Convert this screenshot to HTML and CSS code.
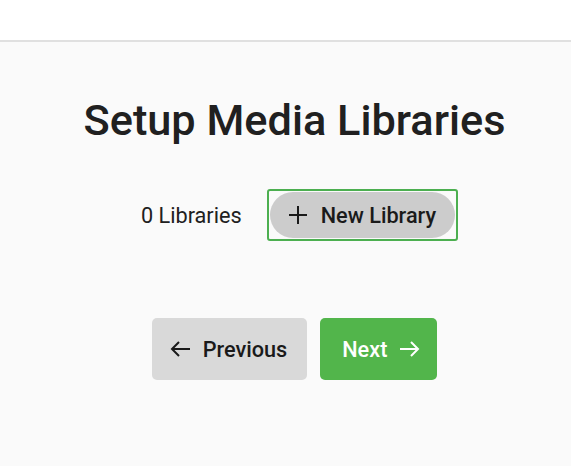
FILE: index.html
```html
<!DOCTYPE html>
<html>
<head>
<meta charset="utf-8">
<link rel="stylesheet" href="styles.css">
</head>
<body>
<header class="topbar"></header>
<main class="page">
  <h1 class="title">Setup Media Libraries</h1>
  <div class="libs">
    <span class="count">0 Libraries</span>
    <div class="focus-ring">
      <button class="newlib">
        <svg class="plus" viewBox="0 0 18 18" width="18" height="18"><path d="M9 0v18M0 9h18" stroke="#1a1a1a" stroke-width="2" fill="none"/></svg>
        <span>New Library</span>
      </button>
    </div>
  </div>
  <div class="nav">
    <button class="btn prev">
      <svg class="arrow" viewBox="0 0 20 16" width="20" height="16"><path d="M20 8H2M9 1L2 8l7 7" stroke="#1a1a1a" stroke-width="2" fill="none"/></svg>
      <span>Previous</span>
    </button>
    <button class="btn next">
      <span>Next</span>
      <svg class="arrow" viewBox="0 0 20 16" width="20" height="16"><path d="M0 8h18M11 1l7 7-7 7" stroke="#fff" stroke-width="2" fill="none"/></svg>
    </button>
  </div>
</main>
</body>
</html>
```
FILE: styles.css
```css
html, body { margin: 0; padding: 0; }
body {
  font-family: Roboto, "Noto Sans", sans-serif;
  background: #fafafa;
  color: #202020;
  height: 466px;
  overflow: hidden;
}
.topbar {
  height: 40px;
  background: #fff;
  border-bottom: 2px solid #e0e0e0;
}
.page {
  display: flex;
  flex-direction: column;
  align-items: center;
  padding-left: 18px;
}
.title {
  font-size: 43.3px;
  font-weight: 500;
  line-height: 52px;
  margin: 53px 0 0;
}
.libs {
  display: flex;
  align-items: center;
  gap: 25px;
  margin-top: 42px;
  margin-left: 10px;
}
.count { font-size: 21.7px; }
.focus-ring {
  border: 2px solid #4caf50;
  border-radius: 3px;
  padding: 1px;
  display: flex;
}
.newlib {
  display: flex;
  align-items: center;
  gap: 14px;
  font: inherit;
  font-size: 21.7px;
  font-weight: 500;
  color: #1a1a1a;
  background: #cccccc;
  border: none;
  border-radius: 23px;
  height: 46px;
  padding: 0 19px;
}
.nav {
  display: flex;
  gap: 13px;
  margin-top: 77px;
}
.btn {
  display: flex;
  align-items: center;
  gap: 13px;
  font: inherit;
  font-size: 21.7px;
  font-weight: 500;
  height: 62px;
  border: none;
  border-radius: 5px;
}
.prev { background: #d9d9d9; color: #1a1a1a; padding: 0 20px 0 18px; }
.next { background: #52b54b; color: #fff; padding: 0 17px 0 22px; }
```
